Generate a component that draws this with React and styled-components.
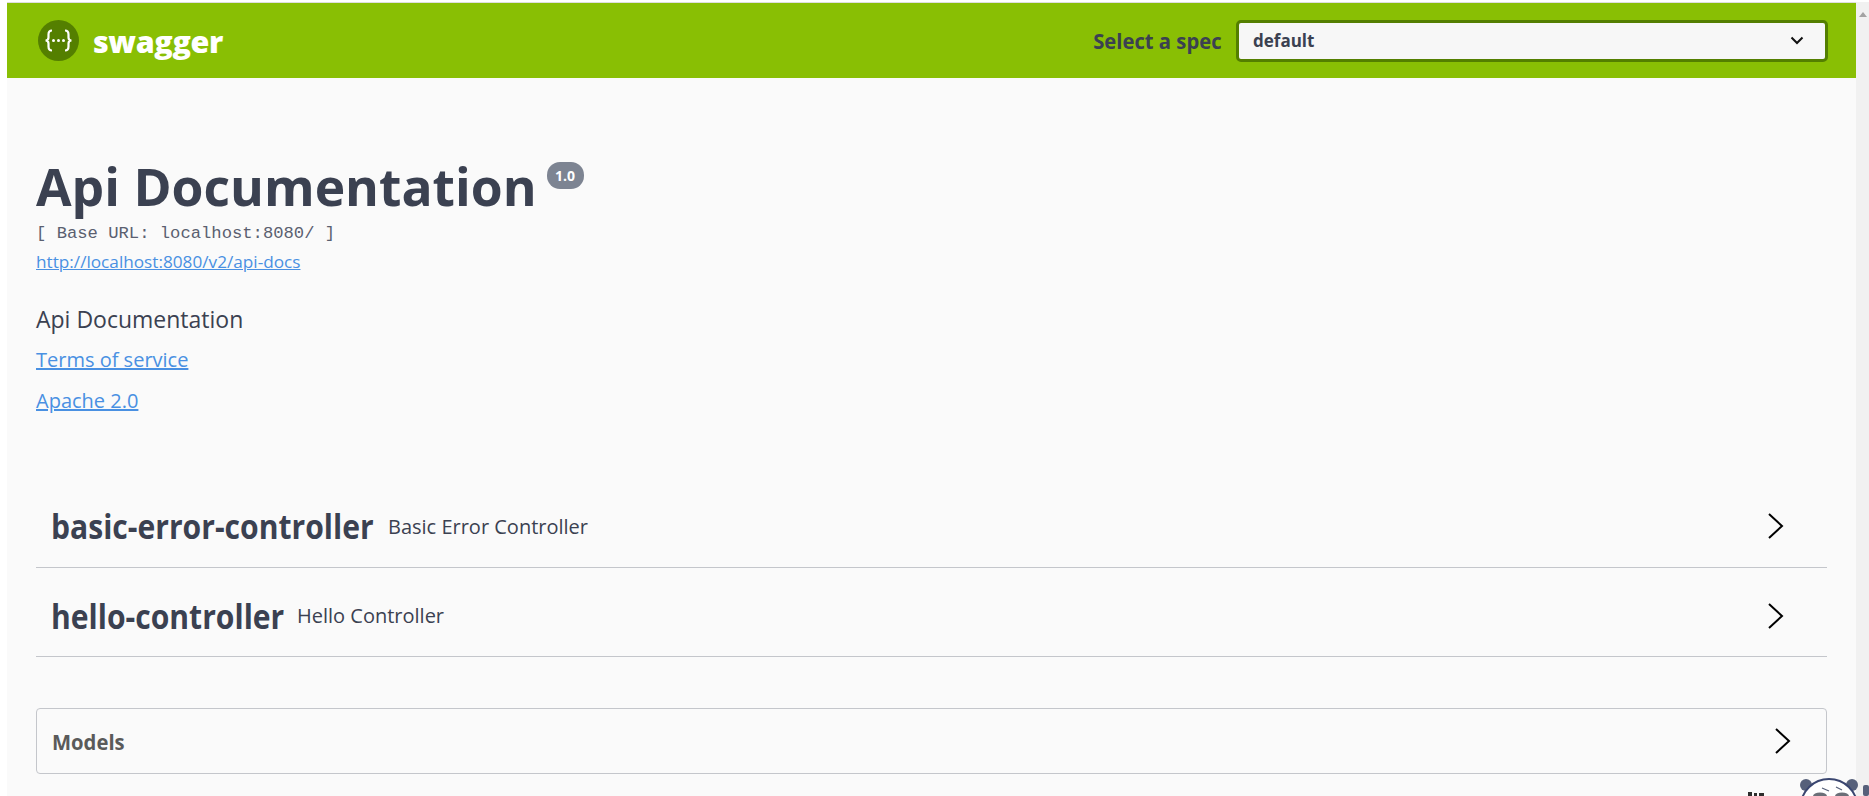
import React from "react";
import styled, { createGlobalStyle } from "styled-components";

const Global = createGlobalStyle`
  html, body {
    margin: 0;
    padding: 0;
    height: 100%;
    overflow: hidden;
    background: #fff;
  }
  body {
    font-family: "Open Sans", sans-serif;
  }
`;

const Frame = styled.div`
  width: 1869px;
  height: 796px;
  display: flex;
  overflow: hidden;
  position: relative;
  padding-top: 2px;
  box-sizing: border-box;
`;

const LeftGutter = styled.div`
  width: 7px;
  background: #fff;
  flex: none;
`;

const Page = styled.div`
  flex: 1;
  background: #fafafa;
  border-top: 1px solid #dedede;
  min-width: 0;
`;

const Scrollbar = styled.div`
  width: 13px;
  flex: none;
  background: #f1f1f1;
  display: flex;
  justify-content: center;
  padding-top: 10px;
  box-sizing: border-box;
`;

const ScrollArrow = styled.div`
  width: 0;
  height: 0;
  border-left: 4px solid transparent;
  border-right: 4px solid transparent;
  border-bottom: 5px solid #a3a3a3;
`;

const Topbar = styled.header`
  height: 75px;
  background: #89bf04;
  display: flex;
  align-items: center;
  justify-content: space-between;
  padding: 0 28px 0 31px;
`;

const Brand = styled.div`
  display: flex;
  align-items: center;
  gap: 14px;
`;

const BrandName = styled.span`
  color: #fff;
  font-size: 30.5px;
  font-weight: 800;
  letter-spacing: -0.4px;
`;

const SpecForm = styled.div`
  display: flex;
  align-items: center;
  gap: 14px;
`;

const SpecLabel = styled.span`
  color: #3b4151;
  font-size: 22px;
  line-height: 28px;
  font-weight: 700;
  margin-bottom: 2px;
  transform: scaleX(0.92);
  transform-origin: right center;
`;

const SpecSelect = styled.div`
  width: 592px;
  height: 42px;
  box-sizing: border-box;
  border: 3px solid #547f00;
  border-radius: 5px;
  background: #f7f7f7;
  display: flex;
  align-items: center;
  justify-content: space-between;
  padding: 0 21px 0 14px;
  color: #3b4151;
  font-size: 17px;
  font-weight: 700;
`;

const Content = styled.main`
  padding: 0 29px;
`;

const Info = styled.section`
  padding-top: 75px;
`;

const TitleRow = styled.div`
  display: flex;
  align-items: flex-start;
`;

const Title = styled.h2`
  margin: 0;
  color: #3b4151;
  font-size: 51.6px;
  line-height: 66px;
  font-weight: 700;
`;

const Version = styled.span`
  margin: 9px 0 0 10px;
  height: 27px;
  width: 37px;
  border-radius: 13px;
  background: #7d8492;
  color: #fff;
  font-size: 14px;
  font-weight: 700;
  display: flex;
  align-items: center;
  justify-content: center;
`;

const BaseUrl = styled.div`
  margin-top: 5px;
  color: #5a6070;
  font-family: "Liberation Mono", monospace;
  font-size: 17.2px;
  line-height: 20px;
`;

const DocsLink = styled.a`
  display: block;
  color: #4990e2;
  font-size: 17.2px;
  line-height: 20px;
  margin-top: 8px;
  text-decoration: underline;
`;

const Description = styled.p`
  margin: 33px 0 0;
  color: #3b4151;
  font-size: 23px;
  line-height: 28px;
`;

const InfoLink = styled.a`
  display: block;
  width: fit-content;
  color: #4990e2;
  font-size: 20px;
  line-height: 28px;
  margin-top: 13px;
  text-decoration: underline;
`;

const Tags = styled.section`
  margin-top: 63px;
`;

const TagRow = styled.div`
  height: ${(p) => p.$height}px;
  box-sizing: border-box;
  border-bottom: 1px solid #c4c6cb;
  display: flex;
  align-items: center;
  padding: 7px 41px 0 15px;
`;

const TagName = styled.span`
  color: #3b4151;
  font-size: 34px;
  font-weight: 700;
  transform: scaleX(0.885);
  transform-origin: left center;
  width: ${(p) => p.$width}px;
  white-space: nowrap;
`;

const TagDescription = styled.small`
  color: #3b4151;
  font-size: 20px;
  flex: 1;
  margin-left: 14px;
`;

const ModelsBox = styled.section`
  margin-top: 51px;
  height: 66px;
  box-sizing: border-box;
  border: 1px solid #c4c6cb;
  border-radius: 4px;
  display: flex;
  align-items: center;
  justify-content: space-between;
  padding: 0 33px 0 15px;
`;

const ModelsTitle = styled.h4`
  margin: 0;
  color: #5a5a5a;
  font-size: 22px;
  font-weight: 700;
  transform: scaleX(0.92);
  transform-origin: left center;
`;

const Mascot = styled.svg`
  position: absolute;
  right: 0;
  bottom: 0;
`;

const Chevron = () => (
  <svg width="20" height="28" viewBox="0 0 20 28" fill="none" stroke="#000" strokeWidth="2">
    <path d="M3 2 L16 14 L3 26" />
  </svg>
);

const App = () => {
  return (
    <>
      <Global />
      <Frame>
        <LeftGutter />
        <Page>
          <Topbar>
            <Brand>
              <svg width="41" height="41" viewBox="0 0 41 41">
                <circle cx="20.5" cy="20.5" r="20.5" fill="#547f00" />
                <path
                  d="M14 10.500c-3 0-3.500 2-3.500 4v3c0 1.500-1 3-3 3 2 0 3 1.500 3 3v3c0 2 .5 4 3.500 4M27 10.500c3 0 3.500 2 3.500 4v3c0 1.500 1 3 3 3-2 0-3 1.500-3 3v3c0 2-.5 4-3.500 4"
                  fill="none"
                  stroke="#fff"
                  strokeWidth="2.200"
                />
                <circle cx="15.500" cy="20.500" r="1.500" fill="#fff" />
                <circle cx="20.500" cy="20.500" r="1.500" fill="#fff" />
                <circle cx="25.500" cy="20.500" r="1.500" fill="#fff" />
              </svg>
              <BrandName>swagger</BrandName>
            </Brand>
            <SpecForm>
              <SpecLabel>Select a spec</SpecLabel>
              <SpecSelect>
                default
                <svg width="14" height="9" viewBox="0 0 14 9" fill="none" stroke="#111" strokeWidth="2">
                  <path d="M1.500 1.500 L7 7 L12.500 1.500" />
                </svg>
              </SpecSelect>
            </SpecForm>
          </Topbar>
          <Content>
            <Info>
              <TitleRow>
                <Title>Api Documentation</Title>
                <Version>1.0</Version>
              </TitleRow>
              <BaseUrl>[ Base URL: localhost:8080/ ]</BaseUrl>
              <DocsLink>http://localhost:8080/v2/api-docs</DocsLink>
              <Description>Api Documentation</Description>
              <InfoLink>Terms of service</InfoLink>
              <InfoLink>Apache 2.0</InfoLink>
            </Info>
            <Tags>
              <TagRow $height={90}>
                <TagName $width={323}>basic-error-controller</TagName>
                <TagDescription>Basic Error Controller</TagDescription>
                <Chevron />
              </TagRow>
              <TagRow $height={89}>
                <TagName $width={232}>hello-controller</TagName>
                <TagDescription>Hello Controller</TagDescription>
                <Chevron />
              </TagRow>
            </Tags>
            <ModelsBox>
              <ModelsTitle>Models</ModelsTitle>
              <Chevron />
            </ModelsBox>
          </Content>
        </Page>
        <Scrollbar>
          <ScrollArrow />
        </Scrollbar>
        {/* panda sticker peeking in at the bottom right corner */}
        <Mascot width="130" height="20" viewBox="0 0 130 20">
          <g fill="#2d2d2d">
            <rect x="9" y="16" width="4" height="4" />
            <rect x="15" y="17" width="3" height="3" />
            <rect x="20" y="17" width="5" height="3" />
          </g>
          <ellipse cx="67" cy="9" rx="6" ry="6" fill="#56607a" />
          <ellipse cx="113" cy="9" rx="6" ry="6" fill="#56607a" />
          <ellipse cx="90" cy="30" rx="28" ry="27" fill="#fff" stroke="#3a4670" strokeWidth="2" />
          <path d="M83 12 L90 15 M97 11 L103 14" stroke="#56607a" strokeWidth="1.200" fill="none" />
          <ellipse cx="81" cy="20" rx="7" ry="3.500" fill="#6b6f78" />
          <ellipse cx="103" cy="20" rx="7" ry="3.500" fill="#6b6f78" />
          <rect x="124" y="9" width="6" height="11" rx="2" fill="#56607a" />
        </Mascot>
      </Frame>
    </>
  );
};

export default App;
